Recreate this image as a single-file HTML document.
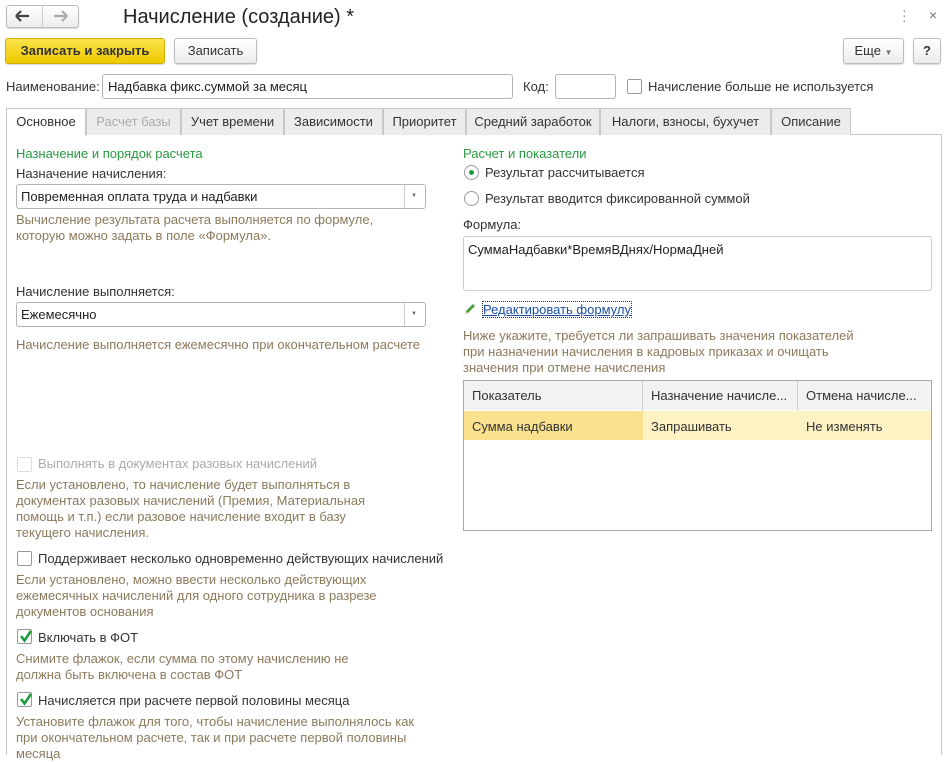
<!DOCTYPE html>
<html><head><meta charset="utf-8"><style>
*{box-sizing:border-box}
body{margin:0;width:948px;height:762px;overflow:hidden;background:#fff;font-family:"Liberation Sans",Arial,sans-serif;font-size:13px;color:#333;position:relative}
.a{position:absolute;white-space:nowrap}
.btn{position:absolute;border:1px solid #bbb;border-radius:3px;background:linear-gradient(#fff,#ececec);box-shadow:0 1px 1px rgba(0,0,0,.15);text-align:center}
.inp{position:absolute;border:1px solid #b5b5b5;border-radius:3px;background:#fff}
.hint{color:#8c7a5c;line-height:16px}
.green{color:#279a42}
.cb{position:absolute;width:15px;height:15px;border:1px solid #999;border-radius:2px;background:#fff}
.tab{position:absolute;top:108px;height:27px;border:1px solid #c8c8c8;border-bottom:none;background:#ececec;line-height:26px;text-align:center;color:#333}
</style></head><body>
<div class="btn" style="left:6px;top:5px;width:73px;height:23px;"></div>
<div class="a" style="left:42px;top:5px;width:1px;height:23px;background:#ccc"></div>
<svg class="a" style="left:15px;top:10px" width="16" height="12"><path d="M1 6H14M1 6L6 1M1 6L6 11" stroke="#444" stroke-width="2.2" fill="none"/></svg>
<svg class="a" style="left:52px;top:10px" width="16" height="12"><path d="M15 6H2M15 6L10 1M15 6L10 11" stroke="#aaa" stroke-width="2.2" fill="none"/></svg>
<div class="a" style="left:123px;top:6px;font-size:20px;color:#222">Начисление (создание) *</div>
<div class="a" style="left:902px;top:8px;color:#888;font-size:14px;line-height:5px">·<br>·<br>·</div>
<div class="a" style="left:929px;top:7px;color:#777;font-size:14px">×</div>
<div class="btn" style="left:5px;top:38px;width:160px;height:26px;background:linear-gradient(#fbe34a,#f0c800);border-color:#d4b000;font-weight:bold;line-height:24px;color:#333">Записать и закрыть</div>
<div class="btn" style="left:174px;top:38px;width:83px;height:26px;line-height:24px">Записать</div>
<div class="btn" style="left:843px;top:38px;width:61px;height:26px;line-height:24px">Еще <span style="font-size:8px;color:#777">▼</span></div>
<div class="btn" style="left:913px;top:38px;width:28px;height:26px;line-height:24px;font-weight:bold">?</div>
<div class="a" style="left:6px;top:79px">Наименование:</div>
<div class="inp" style="left:102px;top:74px;width:411px;height:25px;padding:4px 5px;color:#222">Надбавка фикс.суммой за месяц</div>
<div class="a" style="left:523px;top:79px">Код:</div>
<div class="inp" style="left:555px;top:74px;width:61px;height:25px"></div>
<div class="cb" style="left:627px;top:79px"></div>
<div class="a" style="left:648px;top:79px">Начисление больше не используется</div>
<div class="a" style="left:6px;top:134px;width:936px;height:621px;border:1px solid #c8c8c8;border-bottom:none"></div>
<div class="tab" style="left:6px;width:80px;background:#fff;height:28px">Основное</div>
<div class="tab" style="left:86px;width:95px;color:#aaa">Расчет базы</div>
<div class="tab" style="left:181px;width:103px">Учет времени</div>
<div class="tab" style="left:284px;width:99px">Зависимости</div>
<div class="tab" style="left:383px;width:83px">Приоритет</div>
<div class="tab" style="left:466px;width:134px">Средний заработок</div>
<div class="tab" style="left:600px;width:171px">Налоги, взносы, бухучет</div>
<div class="tab" style="left:771px;width:80px">Описание</div>
<div class="a green" style="left:16px;top:146px">Назначение и порядок расчета</div>
<div class="a" style="left:16px;top:166px">Назначение начисления:</div>
<div class="inp" style="left:16px;top:184px;width:410px;height:25px;padding:4px 4px;color:#222">Повременная оплата труда и надбавки</div>
<div class="a" style="left:404px;top:185px;width:1px;height:23px;background:#ccc"></div>
<div class="a" style="left:411px;top:193px;font-size:6px;color:#666">▼</div>
<div class="a hint" style="left:16px;top:212px">Вычисление результата расчета выполняется по формуле,<br>которую можно задать в поле «Формула».</div>
<div class="a" style="left:16px;top:284px">Начисление выполняется:</div>
<div class="inp" style="left:16px;top:302px;width:410px;height:25px;padding:4px 4px;color:#222">Ежемесячно</div>
<div class="a" style="left:404px;top:303px;width:1px;height:23px;background:#ccc"></div>
<div class="a" style="left:411px;top:311px;font-size:6px;color:#666">▼</div>
<div class="a hint" style="left:16px;top:337px">Начисление выполняется ежемесячно при окончательном расчете</div>
<div class="cb" style="left:17px;top:457px;border-color:#ddd"></div>
<div class="a" style="left:38px;top:456px;color:#aaa">Выполнять в документах разовых начислений</div>
<div class="a hint" style="left:16px;top:477px">Если установлено, то начисление будет выполняться в<br>документах разовых начислений (Премия, Материальная<br>помощь и т.п.) если разовое начисление входит в базу<br>текущего начисления.</div>
<div class="cb" style="left:17px;top:551px"></div>
<div class="a" style="left:38px;top:551px">Поддерживает несколько одновременно действующих начислений</div>
<div class="a hint" style="left:16px;top:572px">Если установлено, можно ввести несколько действующих<br>ежемесячных начислений для одного сотрудника в разрезе<br>документов основания</div>
<div class="cb" style="left:17px;top:629px"></div>
<svg class="a" style="left:17px;top:627px" width="18" height="18"><path d="M4 9L7.5 13.5L14 4" stroke="#1f9a3c" stroke-width="2.6" fill="none"/></svg>
<div class="a" style="left:38px;top:630px">Включать в ФОТ</div>
<div class="a hint" style="left:16px;top:651px">Снимите флажок, если сумма по этому начислению не<br>должна быть включена в состав ФОТ</div>
<div class="cb" style="left:17px;top:692px"></div>
<svg class="a" style="left:17px;top:690px" width="18" height="18"><path d="M4 9L7.5 13.5L14 4" stroke="#1f9a3c" stroke-width="2.6" fill="none"/></svg>
<div class="a" style="left:38px;top:693px">Начисляется при расчете первой половины месяца</div>
<div class="a hint" style="left:16px;top:714px">Установите флажок для того, чтобы начисление выполнялось как<br>при окончательном расчете, так и при расчете первой половины<br>месяца</div>
<div class="a green" style="left:463px;top:146px">Расчет и показатели</div>
<div class="a" style="left:464px;top:165px;width:15px;height:15px;border:1px solid #999;border-radius:50%"></div>
<div class="a" style="left:469px;top:170px;width:5px;height:5px;border-radius:50%;background:#1f9a3c"></div>
<div class="a" style="left:485px;top:165px">Результат рассчитывается</div>
<div class="a" style="left:464px;top:191px;width:15px;height:15px;border:1px solid #999;border-radius:50%"></div>
<div class="a" style="left:485px;top:191px">Результат вводится фиксированной суммой</div>
<div class="a" style="left:463px;top:217px">Формула:</div>
<div class="inp" style="left:463px;top:236px;width:469px;height:55px;padding:5px 4px;color:#222;border-color:#ccc">СуммаНадбавки*ВремяВДнях/НормаДней</div>
<svg class="a" style="left:463px;top:302px" width="14" height="14"><path d="M2 12L3 9L10 2L12 4L5 11Z" fill="#4a9a3a"/><path d="M2 12L3 9L5 11Z" fill="#e8c890"/></svg>
<div class="a" style="left:483px;top:302px;color:#1a4fa8;text-decoration:underline;outline:1px dotted #333">Редактировать формулу</div>
<div class="a hint" style="left:463px;top:328px">Ниже укажите, требуется ли запрашивать значения показателей<br>при назначении начисления в кадровых приказах и очищать<br>значения при отмене начисления</div>
<div class="a" style="left:463px;top:380px;width:469px;height:151px;border:1px solid #aaa;background:#fff"></div>
<div class="a" style="left:464px;top:381px;width:467px;height:29px;background:#f2f2f2"></div>
<div class="a" style="left:642px;top:381px;width:1px;height:29px;background:#ccc"></div>
<div class="a" style="left:797px;top:381px;width:1px;height:29px;background:#ccc"></div>
<div class="a" style="left:472px;top:388px">Показатель</div>
<div class="a" style="left:651px;top:388px">Назначение начисле...</div>
<div class="a" style="left:806px;top:388px">Отмена начисле...</div>
<div class="a" style="left:464px;top:411px;width:467px;height:29px;background:#fdf2c4"></div>
<div class="a" style="left:464px;top:411px;width:179px;height:29px;background:#fae18e"></div>
<div class="a" style="left:472px;top:419px">Сумма надбавки</div>
<div class="a" style="left:651px;top:419px">Запрашивать</div>
<div class="a" style="left:806px;top:419px">Не изменять</div>
</body></html>
